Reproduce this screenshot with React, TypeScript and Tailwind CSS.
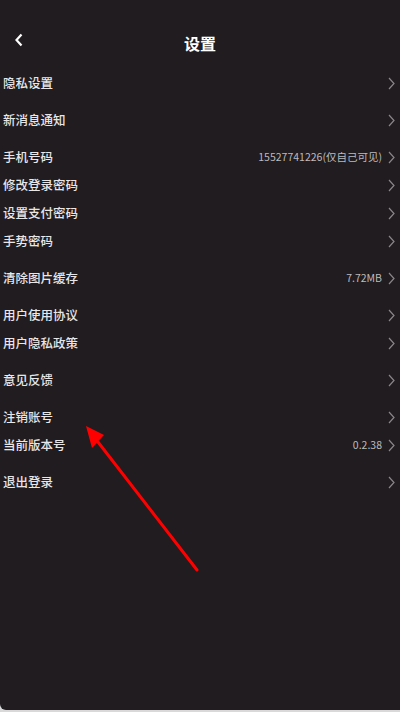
import React from "react";

type Row = { label: string; value?: string };

const groups: Row[][] = [
  [{ label: "隐私设置" }],
  [{ label: "新消息通知" }],
  [
    { label: "手机号码", value: "15527741226(仅自己可见)" },
    { label: "修改登录密码" },
    { label: "设置支付密码" },
    { label: "手势密码" },
  ],
  [{ label: "清除图片缓存", value: "7.72MB" }],
  [{ label: "用户使用协议" }, { label: "用户隐私政策" }],
  [{ label: "意见反馈" }],
  [{ label: "注销账号" }, { label: "当前版本号", value: "0.2.38" }],
  [{ label: "退出登录" }],
];

const font = { fontFamily: '"Noto Sans CJK SC", Roboto, "Noto Sans", sans-serif' };

const Chevron = () => (
  <svg width="7" height="13" viewBox="0 0 7 13" className="shrink-0">
    <path d="M1 1 L6 6.5 L1 12" fill="none" stroke="#8a868a" strokeWidth="1.2" />
  </svg>
);

export default function App() {
  return (
    <div className="w-[400px] h-[712px] bg-[#d9d9d9]" style={font}>
      <div className="relative w-[400px] h-[710px] bg-[#201c1f] rounded-bl-[6px] overflow-hidden">
        {/* header */}
        <div className="relative h-[69px] flex items-center justify-center pt-[16px]">
          <svg width="10" height="14" viewBox="0 0 10 14" className="absolute left-[14px] top-[33px]">
            <path d="M7.5 1.5 L2.5 7 L7.5 12.5" fill="none" stroke="#ffffff" strokeWidth="2.2" />
          </svg>
          <span className="text-[16px] font-bold text-white leading-none">设置</span>
        </div>

        {/* list */}
        <div className="flex flex-col gap-[9px]">
          {groups.map((g, i) => (
            <div key={i} className="flex flex-col">
              {g.map((r) => (
                <div key={r.label} className="h-[28px] flex items-center pl-[3px] pr-[5px]">
                  <span className="text-[12.5px] font-medium text-[#e8e6e8] flex-1">{r.label}</span>
                  {r.value && (
                    <span className="text-[10.5px] text-[#bdbabd] mr-[6px]">{r.value}</span>
                  )}
                  <Chevron />
                </div>
              ))}
            </div>
          ))}
        </div>

        {/* annotation arrow */}
        <svg className="absolute left-0 top-0 pointer-events-none" width="400" height="710">
          <line x1="197" y1="570" x2="98" y2="442" stroke="#ff0000" strokeWidth="3" strokeLinecap="round" />
          <polygon points="86,426 104,435 92,448" fill="#ff0000" />
        </svg>
      </div>
    </div>
  );
}
